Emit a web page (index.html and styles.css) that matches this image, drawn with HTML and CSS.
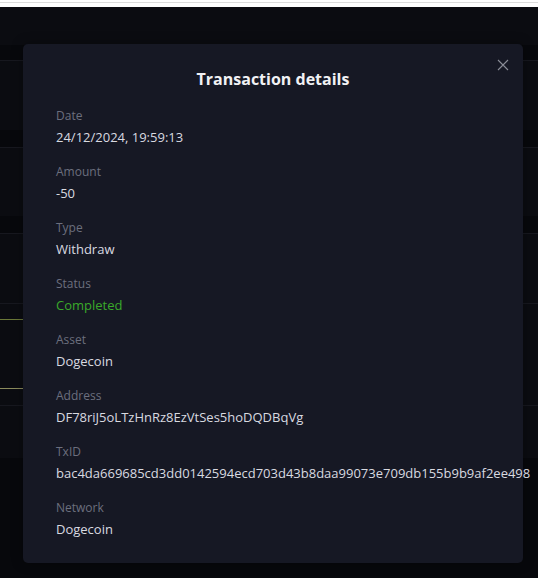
FILE: index.html
```html
<!DOCTYPE html>
<html lang="en">
<head>
    <meta charset="UTF-8">
    <meta name="viewport" content="width=device-width, initial-scale=1.0">
    <title>Transaction details</title>
    <link rel="stylesheet" href="styles.css">
</head>
<body>

    <div class="topbar"></div>

    <div class="app">
        <!-- tabela por trás do modal -->
        <div class="rows">
            <div class="row row-head"></div>
            <div class="row"></div>
            <div class="row row-short"></div>
            <div class="row row-plain"></div>
            <div class="row row-active"></div>
            <div class="row row-last"></div>
        </div>

        <div class="modal">
            <button class="close-btn" aria-label="Close">
                <svg viewBox="0 0 12 12" width="12" height="12"><path d="M1 1L11 11M11 1L1 11" stroke="currentColor" stroke-width="1.1" fill="none"/></svg>
            </button>

            <h2 class="modal-title">Transaction details</h2>

            <div class="field">
                <span class="field-label">Date</span>
                <span class="field-value">24/12/2024, 19:59:13</span>
            </div>
            <div class="field">
                <span class="field-label">Amount</span>
                <span class="field-value">-50</span>
            </div>
            <div class="field">
                <span class="field-label">Type</span>
                <span class="field-value">Withdraw</span>
            </div>
            <div class="field">
                <span class="field-label">Status</span>
                <span class="field-value success">Completed</span>
            </div>
            <div class="field">
                <span class="field-label">Asset</span>
                <span class="field-value">Dogecoin</span>
            </div>
            <div class="field">
                <span class="field-label">Address</span>
                <span class="field-value">DF78riJ5oLTzHnRz8EzVtSes5hoDQDBqVg</span>
            </div>
            <div class="field">
                <span class="field-label">TxID</span>
                <span class="field-value">bac4da669685cd3dd0142594ecd703d43b8daa99073e709db155b9b9af2ee498</span>
            </div>
            <div class="field">
                <span class="field-label">Network</span>
                <span class="field-value">Dogecoin</span>
            </div>
        </div>
    </div>

</body>
</html>
```

FILE: styles.css
```css
/* --- 1. GERAL --- */
:root {
    --bg-color: #0b0c11;
    --bg-band: #07080c;
    --line-color: #17181f;
    --surface-color: #161824;
    --text-primary: #f1f1f4;
    --text-value: #d9dae0;
    --text-secondary: #6c6f7e;
    --success-color: #3aa92a;
}
* { margin: 0; padding: 0; box-sizing: border-box; }
body {
    background-color: #fff;
    font-family: 'Open Sans', sans-serif;
    width: 538px;
}

.topbar {
    height: 7px;
    border-top: 2px solid #fff;
    box-shadow: inset 0 1px 0 #dcdcdc;
}

/* --- 2. FUNDO (tabela escurecida) --- */
.app {
    position: relative;
    height: 571px;
    background-color: var(--bg-band);
    overflow: hidden;
}
.rows { display: flex; flex-direction: column; }
.row {
    flex-shrink: 0;
    height: 87px;
    border-bottom: 1px solid var(--line-color);
    background: linear-gradient(var(--bg-color) calc(100% - 17px), var(--bg-band) calc(100% - 17px));
}
.row-head { height: 54px; background: linear-gradient(var(--bg-color) 38px, var(--bg-band) 38px); }
.row-short { height: 86px; }
.row-plain { height: 70px; background: var(--bg-color); }
.row-active {
    height: 102px;
    background:
        linear-gradient(transparent 15px, #6b7838 15px 16px, transparent 16px 84px, #8b8b5c 84px 85px, transparent 85px) 0 0 / 500px 100% no-repeat,
        var(--bg-color);
}
.row-last { height: 69px; background-color: #0d0e13; border-bottom: none; }

/* --- 3. MODAL --- */
.modal {
    position: absolute;
    left: 23px;
    top: 37px;
    width: 500px;
    height: 519px;
    background-color: var(--surface-color);
    border-radius: 5px;
    padding: 25px 33px 0;
    box-shadow: 0 0 12px rgba(0, 0, 0, 0.35);
}
.close-btn {
    position: absolute;
    top: 15px;
    right: 14px;
    width: 12px;
    height: 12px;
    border: none;
    background: none;
    color: #8b8d97;
    cursor: pointer;
    display: flex;
}
.modal-title {
    text-align: center;
    font-size: 16px;
    line-height: 20px;
    font-weight: 700;
    color: var(--text-primary);
    margin-bottom: 19px;
}

.field { display: flex; flex-direction: column; margin-bottom: 18px; }
.field-label { font-size: 12px; line-height: 16px; color: var(--text-secondary); margin-bottom: 4px; }
.field-value { font-size: 13px; line-height: 18px; color: var(--text-value); white-space: nowrap; }
.field-value.success { color: var(--success-color); }
```
